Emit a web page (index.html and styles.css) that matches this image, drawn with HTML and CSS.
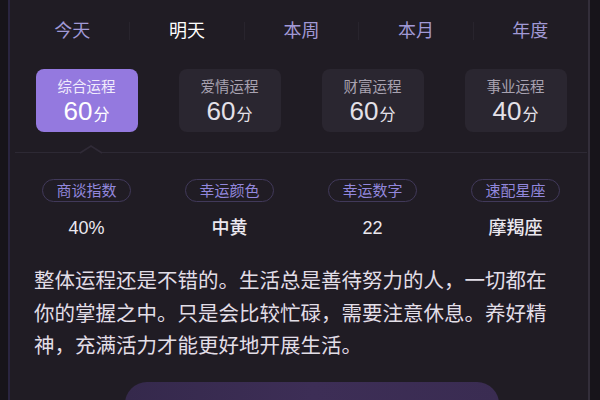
FILE: index.html
```html
<!DOCTYPE html>
<html lang="zh">
<head>
<meta charset="utf-8">
<link rel="stylesheet" href="styles.css">
</head>
<body>
<div class="panel">
  <nav class="tabs">
    <span class="tab">今天</span>
    <span class="tab active">明天</span>
    <span class="tab">本周</span>
    <span class="tab">本月</span>
    <span class="tab">年度</span>
  </nav>
  <div class="cards">
    <div class="card active"><div class="card-title">综合运程</div><div class="card-score">60<span class="unit">分</span></div></div>
    <div class="card"><div class="card-title">爱情运程</div><div class="card-score">60<span class="unit">分</span></div></div>
    <div class="card"><div class="card-title">财富运程</div><div class="card-score">60<span class="unit">分</span></div></div>
    <div class="card"><div class="card-title">事业运程</div><div class="card-score">40<span class="unit">分</span></div></div>
  </div>
  <div class="divider">
    <svg class="notch" width="22" height="9" viewBox="0 0 22 9"><polygon points="0,8 11,1 22,8" fill="#201c24"/><polyline points="0,8 11,1 22,8" fill="none" stroke="#302b37" stroke-width="1.5"/></svg>
  </div>
  <div class="stats">
    <div class="stat"><span class="pill">商谈指数</span><span class="value light">40%</span></div>
    <div class="stat"><span class="pill">幸运颜色</span><span class="value">中黄</span></div>
    <div class="stat"><span class="pill">幸运数字</span><span class="value light">22</span></div>
    <div class="stat"><span class="pill">速配星座</span><span class="value">摩羯座</span></div>
  </div>
  <p class="desc">整体运程还是不错的。生活总是善待努力的人，一切都在你的掌握之中。只是会比较忙碌，需要注意休息。养好精神，充满活力才能更好地开展生活。</p>
  <div class="btn-row"><div class="btn"></div></div>
</div>
</body>
</html>
```

FILE: styles.css
```css
html, body {
  margin: 0;
  padding: 0;
  background: #17141a;
  font-family: "Liberation Sans", "Noto Sans CJK SC", sans-serif;
  height: 400px;
  overflow: hidden;
}
.panel {
  margin-left: 8px;
  width: 572px;
  height: 400px;
  overflow: hidden;
  background: #201c24;
  border-left: 2px solid #2a2540;
  border-right: 2px solid #332e3a;
  padding: 0 1px 0 5px;
  box-sizing: content-box;
}
.tabs {
  display: grid;
  grid-template-columns: repeat(5, 1fr);
  padding-top: 22px;
}
.tab {
  height: 18px;
  line-height: 18px;
  text-align: center;
  font-size: 18px;
  color: #a199d6;
  border-left: 1px solid #28242d;
}
.tab:first-child { border-left: none; }
.tab.active { color: #ffffff; }
.cards {
  margin-top: 29px;
  display: grid;
  grid-template-columns: repeat(4, 143px);
  justify-items: center;
}
.card {
  width: 102px;
  height: 63px;
  box-sizing: border-box;
  padding-top: 9px;
  border-radius: 8px;
  background: #2a2630;
  text-align: center;
}
.card-title {
  font-size: 14.5px;
  line-height: 18px;
  color: #a8a2b0;
}
.card-score {
  margin-top: 1px;
  font-size: 26px;
  line-height: 28px;
  color: #e4e1e8;
}
.unit {
  font-size: 16px;
  margin-left: 1px;
}
.card.active { background: #9479df; }
.card.active .card-title { color: #f1ecfc; }
.card.active .card-score { color: #ffffff; }
.divider {
  position: relative;
  margin-top: 20px;
  height: 0;
  border-top: 1.5px solid #2d2934;
}
.notch {
  position: absolute;
  left: 65px;
  top: -8.5px;
}
.stats {
  margin-top: 26px;
  display: grid;
  grid-template-columns: repeat(4, 143px);
  justify-items: center;
}
.stat {
  display: flex;
  flex-direction: column;
  align-items: center;
}
.pill {
  height: 23px;
  line-height: 21px;
  box-sizing: border-box;
  border: 1px solid #41395a;
  border-radius: 12px;
  padding: 0 13px;
  font-size: 15px;
  color: #9287dc;
}
.value {
  margin-top: 14px;
  font-size: 18px;
  line-height: 24px;
  color: #ebe8ef;
  font-weight: 500;
}
.value.light { font-weight: 400; }
.desc {
  margin: 25px 0 0 19px;
  width: 522px;
  font-size: 20.5px;
  line-height: 32.5px;
  color: #e2dee7;
}
.btn-row {
  margin-top: 19px;
  display: flex;
  justify-content: center;
}
.btn {
  margin-left: 22px;
  width: 374px;
  height: 50px;
  border-radius: 22px;
  background: linear-gradient(90deg, #35294c, #3d2e56 50%, #3a2c52);
}
```
